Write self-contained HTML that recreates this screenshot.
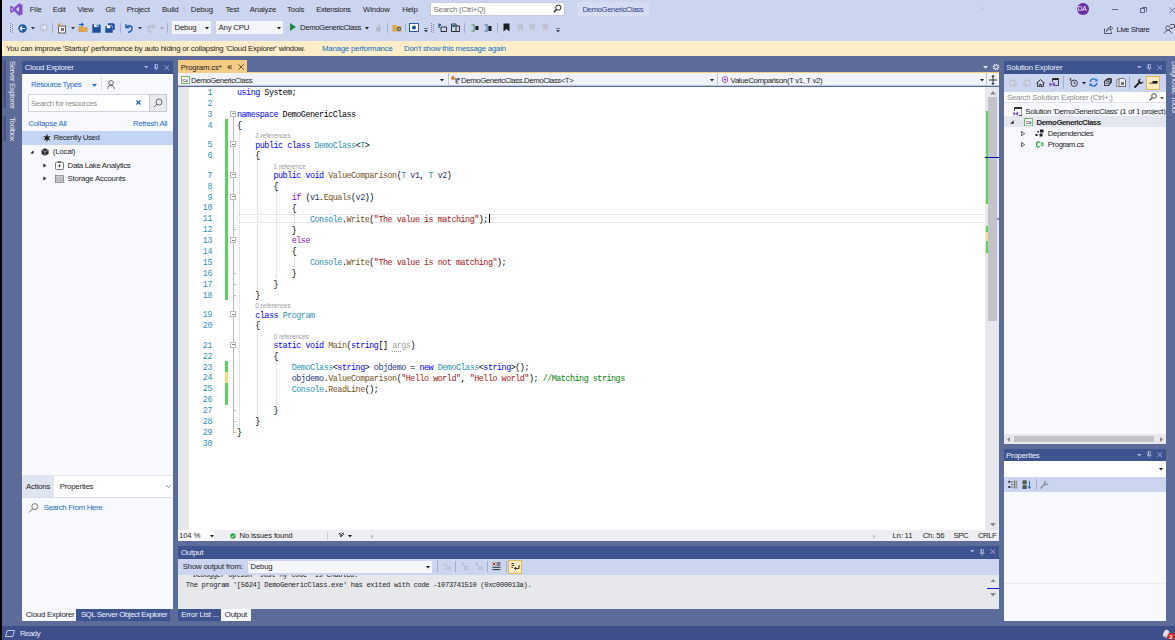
<!DOCTYPE html>
<html><head><meta charset="utf-8">
<style>
*{margin:0;padding:0;box-sizing:border-box}
html,body{width:1175px;height:640px;overflow:hidden;background:#5D6B99;font-family:"Liberation Sans",sans-serif;font-size:7.8px;letter-spacing:-0.2px;color:#1E1E1E}
.a{position:absolute}
.t{position:absolute;white-space:nowrap;line-height:1}
#blk{left:0;top:0;width:2px;height:640px;background:#000}
#menu{left:2px;top:0;width:1173px;height:40.5px;background:#CCD5F0}
#info{left:2px;top:40.5px;width:1173px;height:15.5px;background:#FDEDC9}
#status{left:2px;top:626px;width:1173px;height:14px;background:#3E4F8C}
.cap{background:#3E5491;color:#F0F2F8}
#ce{left:22px;top:61px;width:151px;height:560px;background:#F7F9FE}
#ed{left:178px;top:60px;width:821px;height:481px;background:#fff}
#out{left:178px;top:545.5px;width:821px;height:76px;background:#E7E8EC}
#se{left:1003.7px;top:61px;width:162.6px;height:382.7px;background:#F7F9FE}
#pr{left:1003.7px;top:448.8px;width:162.6px;height:172.6px;background:#F7F9FE}
.ln{left:189px;width:23px;text-align:right;font-family:"Liberation Mono",monospace;font-size:8.3px;letter-spacing:-0.4px;color:#2B91AF}
.code{left:237px;font-family:"Liberation Mono",monospace;font-size:8.4px;letter-spacing:-0.465px;color:#000;white-space:pre}
.lens{font-size:6.35px;letter-spacing:0;color:#9C9C9C}
.k{color:#0000FF}.ty{color:#2B91AF}.s{color:#A31515}.c{color:#008000}.m{color:#74531F}.v{color:#1F377F}.ct{color:#8F08C4}.g{color:#A0A0A0}.g2{color:#A0A0A0;border-bottom:0.8px dotted #A0A0A0}
</style></head><body>
<!-- MENU BAR -->
<div class="a" style="left:0;top:0;width:2px;height:640px;background:#000;z-index:5"></div>
<div class="a" style="left:2px;top:0;width:1173px;height:40.5px;background:#CCD5F0"></div>
<svg class="a" style="left:9.5px;top:3px" width="13" height="13" viewBox="0 0 13 13"><path d="M9.0 0.2 L12.5 1.7 V11.2 L9.0 12.8 L4.0 7.9 L1.4 9.9 L0.2 9.3 V3.4 L1.4 2.7 L4.0 4.8 Z M9.0 3.8 L5.8 6.35 L9.0 8.9 Z M1.6 4.7 V8.0 L3.3 6.35 Z" fill="#8650CC" fill-rule="evenodd"/></svg>
<div class="t" style="left:29.8px;top:5.8px">File</div>
<div class="t" style="left:52.8px;top:5.8px">Edit</div>
<div class="t" style="left:77.4px;top:5.8px">View</div>
<div class="t" style="left:105.5px;top:5.8px">Git</div>
<div class="t" style="left:126.8px;top:5.8px">Project</div>
<div class="t" style="left:162px;top:5.8px">Build</div>
<div class="t" style="left:190.8px;top:5.8px">Debug</div>
<div class="t" style="left:225.4px;top:5.8px">Test</div>
<div class="t" style="left:249.8px;top:5.8px">Analyze</div>
<div class="t" style="left:287.1px;top:5.8px">Tools</div>
<div class="t" style="left:316.2px;top:5.8px;letter-spacing:-0.37px">Extensions</div>
<div class="t" style="left:363.1px;top:5.8px">Window</div>
<div class="t" style="left:402.3px;top:5.8px">Help</div>
<div class="a" style="left:430.4px;top:2.2px;width:135px;height:13.4px;background:#fff;border:1px solid #C6CCDF"></div>
<div class="t" style="left:433.6px;top:5.8px;color:#717171">Search (Ctrl+Q)</div>
<svg class="a" style="left:553px;top:4px" width="9" height="9" viewBox="0 0 9 9"><circle cx="5.3" cy="3.6" r="2.6" fill="none" stroke="#1E1E1E" stroke-width="1"/><path d="M3.4 5.5 L0.8 8.2" stroke="#1E1E1E" stroke-width="1.3"/></svg>
<div class="a" style="left:577px;top:1.6px;width:71.7px;height:14.6px;background:#D6DDF3"></div>
<div class="t" style="left:582.4px;top:5.8px;color:#33438A;letter-spacing:-0.42px">DemoGenericClass</div>
<div class="a" style="left:1076.7px;top:2.8px;width:12.4px;height:12.4px;border-radius:50%;background:#6A2DA4"></div>
<div class="t" style="left:1077.6px;top:6.1px;color:#fff;font-size:6.6px">DA</div>
<div class="a" style="left:1111.8px;top:9.1px;width:6.3px;height:0.8px;background:#5B6792"></div>
<div class="a" style="left:1140px;top:7.8px;width:5.4px;height:5.2px;border:0.75px solid #5B6792"></div>
<div class="a" style="left:1141.5px;top:6.5px;width:5.4px;height:5.2px;border-top:0.75px solid #5B6792;border-right:0.75px solid #5B6792"></div>
<svg class="a" style="left:1168.5px;top:7px" width="8" height="8" viewBox="0 0 8 8"><path d="M0.3 0.3 L6.5 6.3 M6.5 0.3 L0.3 6.3" stroke="#5B6792" stroke-width="0.75"/></svg>
<!-- TOOLBAR -->
<svg class="a" style="left:10px;top:22.5px" width="3" height="10" viewBox="0 0 3 10"><g fill="#7A80A0"><rect x="0" y="0" width="1" height="1"/><rect x="2" y="1" width="1" height="1"/><rect x="0" y="2" width="1" height="1"/><rect x="2" y="3" width="1" height="1"/><rect x="0" y="4" width="1" height="1"/><rect x="2" y="5" width="1" height="1"/><rect x="0" y="6" width="1" height="1"/><rect x="2" y="7" width="1" height="1"/><rect x="0" y="8" width="1" height="1"/><rect x="2" y="9" width="1" height="1"/></g></svg>
<svg class="a" style="left:17.9px;top:23.5px" width="9" height="9" viewBox="0 0 9 9"><circle cx="4.5" cy="4.5" r="4.2" fill="#1B5BA6"/><path d="M2 4.5 H7 M2 4.5 L4.2 2.5 M2 4.5 L4.2 6.5" stroke="#fff" stroke-width="1.1" fill="none"/></svg>
<svg class="a" style="left:31px;top:26.5px" width="4" height="3"><path d="M0 0 H4 L2 2.5Z" fill="#3A3A4A"/></svg>
<svg class="a" style="left:38.8px;top:23.3px" width="9" height="9" viewBox="0 0 9 9"><circle cx="4.5" cy="4.5" r="4.2" fill="#C3C8D8"/><path d="M2 4.5 H7 M7 4.5 L4.8 2.5 M7 4.5 L4.8 6.5" stroke="#EEF0F8" stroke-width="1.1" fill="none"/></svg>
<div class="a" style="left:52.3px;top:22.5px;width:0.8px;height:10px;background:#A5AEC9"></div>
<svg class="a" style="left:57.4px;top:22.5px" width="10" height="11" viewBox="0 0 10 11"><rect x="1.5" y="3" width="7" height="7" fill="#F4F4F4" stroke="#555" stroke-width="0.9"/><path d="M0.5 0.5 L3.5 0.5 L3.5 3.5 L0.5 3.5Z" fill="#D89B4A"/><rect x="4" y="5" width="3" height="3" fill="#777"/></svg>
<svg class="a" style="left:71px;top:26.5px" width="4" height="3"><path d="M0 0 H4 L2 2.5Z" fill="#3A3A4A"/></svg>
<svg class="a" style="left:77.9px;top:22px" width="10" height="11" viewBox="0 0 10 11"><path d="M0.5 4 H4 L5 5 H9.5 V10 H0.5Z" fill="#DCA64C"/><path d="M1 2.5 L5 2.5 M3.5 0.8 L5.2 2.5 L3.5 4.2" stroke="#1B5BA6" stroke-width="1.1" fill="none"/></svg>
<svg class="a" style="left:92.4px;top:23.5px" width="9" height="9" viewBox="0 0 9 9"><path d="M0.3 0.3 H7.5 L8.7 1.5 V8.7 H0.3Z" fill="#1B4E9B"/><rect x="2" y="0.3" width="4.5" height="2.8" fill="#fff"/><rect x="4.6" y="0.8" width="1.2" height="1.8" fill="#1B4E9B"/></svg>
<svg class="a" style="left:105.4px;top:22.5px" width="10" height="10" viewBox="0 0 10 10"><path d="M0.3 3 H6.5 L7.7 4.2 V9.7 H0.3Z" fill="#1B4E9B"/><path d="M3 0.3 H8.5 L9.7 1.5 V7 H8 V3.5 L6.8 2.2 H3Z" fill="#1B4E9B"/><rect x="1.8" y="3" width="3.5" height="2.2" fill="#fff"/></svg>
<div class="a" style="left:119.5px;top:22.5px;width:0.8px;height:10px;background:#A5AEC9"></div>
<svg class="a" style="left:124.3px;top:23px" width="9" height="10" viewBox="0 0 9 10"><path d="M2 1 V4.5 H5.5" stroke="#1B5BA6" stroke-width="1.3" fill="none"/><path d="M2.3 4.2 C4 2 8 2.2 8 5.5 C8 7.8 6 9 4 9.3" stroke="#1B5BA6" stroke-width="1.4" fill="none"/></svg>
<svg class="a" style="left:137.5px;top:26.5px" width="4" height="3"><path d="M0 0 H4 L2 2.5Z" fill="#3A3A4A"/></svg>
<svg class="a" style="left:146.8px;top:23px" width="9" height="10" viewBox="0 0 9 10"><path d="M7 1 V4.5 H3.5" stroke="#B5B9C7" stroke-width="1.2" fill="none"/><path d="M6.7 4.2 C5 2 1 2.2 1 5.5 C1 7.8 3 9 5 9.3" stroke="#B5B9C7" stroke-width="1.2" fill="none"/></svg>
<svg class="a" style="left:159.5px;top:26.5px" width="4" height="3"><path d="M0 0 H4 L2 2.5Z" fill="#9A9FB0"/></svg>
<div class="a" style="left:167.2px;top:22.5px;width:0.8px;height:10px;background:#A5AEC9"></div>
<div class="a" style="left:172.3px;top:21.3px;width:39.2px;height:12.4px;background:#F5F6FA"></div>
<div class="t" style="left:174.5px;top:24px">Debug</div>
<svg class="a" style="left:205px;top:26.5px" width="4" height="3"><path d="M0 0 H4 L2 2.5Z" fill="#1E1E1E"/></svg>
<div class="a" style="left:216px;top:21.3px;width:67px;height:12.4px;background:#F5F6FA"></div>
<div class="t" style="left:218.5px;top:24px">Any CPU</div>
<svg class="a" style="left:277px;top:26.5px" width="4" height="3"><path d="M0 0 H4 L2 2.5Z" fill="#1E1E1E"/></svg>
<svg class="a" style="left:289.7px;top:23.3px" width="6" height="8"><path d="M0 0 L6 4 L0 8Z" fill="#1E8A3A"/></svg>
<div class="t" style="left:300px;top:24px;letter-spacing:-0.42px">DemoGenericClass</div>
<svg class="a" style="left:365px;top:26.5px" width="4" height="3"><path d="M0 0 H4 L2 2.5Z" fill="#1E1E1E"/></svg>
<svg class="a" style="left:375px;top:23px" width="7" height="9" viewBox="0 0 7 9"><path d="M3.5 0.3 C6.5 3 6.8 8.7 3.5 8.7 C0.2 8.7 0.5 5 2 3.3 C2.2 4.5 2.8 5 3.2 5 C3.8 3.5 3.8 2 3.5 0.3Z" fill="#B4B9CA"/></svg>
<div class="a" style="left:386.7px;top:22.5px;width:0.8px;height:10px;background:#A5AEC9"></div>
<svg class="a" style="left:391.6px;top:23px" width="10" height="9"><path d="M0.5 2 H4 L5 3 H9.5 V8.5 H0.5Z" fill="#DCA64C"/><circle cx="7" cy="6" r="1.6" fill="none" stroke="#1B4E9B" stroke-width="0.9"/></svg>
<div class="a" style="left:404.5px;top:22.5px;width:0.8px;height:10px;background:#A5AEC9"></div>
<svg class="a" style="left:409.4px;top:23px" width="10" height="9"><rect x="0.5" y="0.5" width="9" height="8" fill="#fff" stroke="#1B4E9B" stroke-width="0.9"/><circle cx="5" cy="4.5" r="2" fill="#1B4E9B"/></svg>
<svg class="a" style="left:423.5px;top:27.5px" width="4" height="5"><path d="M0 0.4 H4" stroke="#3A3A4A" stroke-width="0.7"/><path d="M0 2 H4 L2 4.5Z" fill="#3A3A4A"/></svg>
<svg class="a" style="left:431px;top:22.5px" width="3" height="10"><g fill="#7A80A0"><rect x="0" y="0" width="1" height="1"/><rect x="2" y="1" width="1" height="1"/><rect x="0" y="2" width="1" height="1"/><rect x="2" y="3" width="1" height="1"/><rect x="0" y="4" width="1" height="1"/><rect x="2" y="5" width="1" height="1"/><rect x="0" y="6" width="1" height="1"/><rect x="2" y="7" width="1" height="1"/><rect x="0" y="8" width="1" height="1"/><rect x="2" y="9" width="1" height="1"/></g></svg>
<svg class="a" style="left:437.8px;top:23px" width="9" height="9"><path d="M1 0.5 V5 M1 2.5 H3 M3 4 H8.5 V8.5 H3Z" stroke="#1E1E1E" stroke-width="0.9" fill="none"/><rect x="1" y="1" width="2" height="2" fill="#1B5BA6"/></svg>
<svg class="a" style="left:450.8px;top:23px" width="9" height="9"><path d="M0.5 1 H5 V8.5 H0.5Z M5 3 H8.5 V8.5 H5" stroke="#1E1E1E" stroke-width="0.9" fill="none"/><rect x="1.5" y="2" width="2.5" height="2" fill="#1B5BA6"/></svg>
<div class="a" style="left:464.3px;top:22.5px;width:0.8px;height:10px;background:#A5AEC9"></div>
<svg class="a" style="left:470.8px;top:23.5px" width="8" height="8"><path d="M0.5 1 H4 M2 3 H6 M2 5 H6 M0.5 7 H4" stroke="#2A8A3A" stroke-width="0.9"/><rect x="4.5" y="2" width="3" height="4" fill="#1E1E1E"/></svg>
<svg class="a" style="left:483.7px;top:23.5px" width="8" height="8"><path d="M0.5 1 H4 M2 3 H6 M2 5 H6 M0.5 7 H4" stroke="#1B5BA6" stroke-width="0.9"/><rect x="4.5" y="2" width="3" height="5" fill="#1E1E1E"/></svg>
<div class="a" style="left:497.3px;top:22.5px;width:0.8px;height:10px;background:#A5AEC9"></div>
<svg class="a" style="left:502.5px;top:23px" width="7" height="9"><path d="M0.5 0.5 H6.5 V8.5 L3.5 6 L0.5 8.5Z" fill="#1E1E1E"/></svg>
<svg class="a" style="left:515.5px;top:23px" width="8" height="9"><path d="M2 0.5 H7 V8 L4.5 6 L2 8Z" fill="#C0C4D2"/><path d="M0 3 H3 L1.5 1.5" stroke="#C0C4D2" stroke-width="0.8" fill="none"/></svg>
<svg class="a" style="left:528px;top:23px" width="8" height="9"><path d="M2 0.5 H7 V8 L4.5 6 L2 8Z" fill="#C0C4D2"/><path d="M0 3 H3 L1.5 4.5" stroke="#C0C4D2" stroke-width="0.8" fill="none"/></svg>
<svg class="a" style="left:540.5px;top:23px" width="8" height="9"><path d="M2 0.5 H7 V8 L4.5 6 L2 8Z" fill="#C0C4D2"/><path d="M0 1 L3 4 M3 1 L0 4" stroke="#C0C4D2" stroke-width="0.8" fill="none"/></svg>
<svg class="a" style="left:556px;top:27.5px" width="4" height="5"><path d="M0 0.4 H4" stroke="#3A3A4A" stroke-width="0.7"/><path d="M0 2 H4 L2 4.5Z" fill="#3A3A4A"/></svg>
<svg class="a" style="left:1103.6px;top:24.6px" width="9" height="9"><path d="M0.5 3.5 V8.5 H7.5 V6.5" stroke="#3A3A4A" stroke-width="0.8" fill="none"/><path d="M2.5 6.5 C2.5 3.5 4.5 2.5 6.5 2.5 V1 L8.7 3.2 L6.5 5.4 V4 C5 4 3.5 4.5 2.5 6.5Z" stroke="#3A3A4A" stroke-width="0.8" fill="none"/></svg>
<div class="t" style="left:1116.5px;top:25.5px;letter-spacing:-0.45px">Live Share</div>
<svg class="a" style="left:1164px;top:24px" width="11" height="10"><circle cx="4" cy="4" r="2.2" fill="none" stroke="#3A3A4A" stroke-width="0.8"/><path d="M0.5 9.5 C1 7 2.5 6.5 4 6.5 C5.5 6.5 7 7 7.5 9.5" stroke="#3A3A4A" stroke-width="0.8" fill="none"/><path d="M6 0.5 H10.5 V4 H8 L7 5" stroke="#3A3A4A" stroke-width="0.8" fill="none"/></svg>
<!-- INFOBAR -->
<div class="a" style="left:2px;top:40.5px;width:1173px;height:15.5px;background:#FDEDC9"></div>
<div class="t" style="left:6px;top:44.6px">You can improve 'Startup' performance by auto hiding or collapsing 'Cloud Explorer' window.</div>
<div class="t" style="left:322px;top:44.6px;color:#0E70C0">Manage performance</div>
<div class="t" style="left:404px;top:44.6px;color:#0E70C0">Don't show this message again</div>

<!-- LEFT AUTOHIDE TABS -->
<div class="a" style="left:2.5px;top:60px;width:3px;height:48px;background:#4A5886"></div>
<div class="a" style="left:2.5px;top:116px;width:3px;height:25px;background:#4A5886"></div>
<div class="t" style="left:8.2px;top:60.5px;color:#E6E9F2;letter-spacing:-0.45px;transform-origin:0 0;transform:translate(8px,0) rotate(90deg)">Server Explorer</div>
<div class="t" style="left:8.2px;top:116.5px;color:#E6E9F2;letter-spacing:-0.4px;transform-origin:0 0;transform:translate(8px,0) rotate(90deg)">Toolbox</div>
<!-- CLOUD EXPLORER -->
<div class="a" style="left:22px;top:61px;width:151px;height:547.7px;background:#F7F9FE"></div><div class="a" style="left:22px;top:608.7px;width:54px;height:12.6px;background:#F7F9FE"></div>
<div class="a cap" style="left:22px;top:61px;width:151px;height:12.7px"></div>
<div class="t" style="left:24.8px;top:63.6px;color:#EEF0F7">Cloud Explorer</div>
<svg class="a" style="left:143.6px;top:65.8px" width="4.6" height="2.4"><path d="M0 0 H4.6 L2.3 2.4Z" fill="#A9B4DB"/></svg>
<svg class="a" style="left:154.0px;top:64.1px" width="4.4" height="6.8" viewBox="0 0 4.4 6.8"><path d="M1.1 0.45 H3.5 V4.2 H1.1Z" fill="none" stroke="#A9B4DB" stroke-width="0.8"/><rect x="0.8" y="0.4" width="1.2" height="3.9" fill="#A9B4DB"/><path d="M0 4.3 H4.4 M2.2 4.3 V6.8" stroke="#A9B4DB" stroke-width="0.8"/></svg>
<svg class="a" style="left:163.6px;top:64.8px" width="5.4" height="5.2"><path d="M0.3 0.3 L5.1 4.9 M5.1 0.3 L0.3 4.9" stroke="#A9B4DB" stroke-width="0.9"/></svg>
<div class="t" style="left:31px;top:80.9px;color:#1E6BC6;letter-spacing:-0.42px">Resource Types</div>
<svg class="a" style="left:91.8px;top:83.5px" width="5" height="3"><path d="M0 0 H5 L2.5 2.8Z" fill="#1E6BC6"/></svg>
<div class="a" style="left:101.4px;top:76.5px;width:0.7px;height:13.5px;background:#D6DBE8"></div>
<svg class="a" style="left:106.6px;top:79.8px" width="8" height="9" viewBox="0 0 8 9"><circle cx="4" cy="2.9" r="2.3" fill="none" stroke="#3A3A4A" stroke-width="0.8"/><path d="M0.6 8.8 C0.8 6.3 2.2 5.3 4 5.3 C5.8 5.3 7.2 6.3 7.4 8.8" stroke="#3A3A4A" stroke-width="0.8" fill="none"/></svg>
<div class="a" style="left:28.3px;top:94px;width:138.4px;height:17.7px;background:#fff;border:1px solid #CFD3DE"></div>
<div class="t" style="left:31px;top:100.2px;color:#8A8A8A;letter-spacing:-0.33px">Search for resources</div>
<svg class="a" style="left:135.6px;top:100.4px" width="5" height="5"><path d="M0.5 0.5 L4.5 4.5 M4.5 0.5 L0.5 4.5" stroke="#1E6BC6" stroke-width="1.25"/></svg>
<div class="a" style="left:148.5px;top:94px;width:18.2px;height:17.7px;background:#E9EAEF;border:1px solid #C4C8D3"></div>
<svg class="a" style="left:152.5px;top:97.5px" width="10" height="10" viewBox="0 0 10 10"><circle cx="6" cy="4" r="3" fill="none" stroke="#4A4A5A" stroke-width="0.8"/><path d="M3.8 6.2 L0.8 9.2" stroke="#4A4A5A" stroke-width="0.9"/></svg>
<div class="t" style="left:28.3px;top:119.7px;color:#1E6BC6">Collapse All</div>
<div class="t" style="left:133.1px;top:119.7px;color:#1E6BC6;letter-spacing:-0.33px">Refresh All</div>
<div class="a" style="left:22px;top:131.4px;width:151px;height:13.2px;background:#C4D4F5"></div>
<svg class="a" style="left:40.5px;top:133px" width="10" height="10" viewBox="0 0 10 10"><path d="M0.5 4 H2.5 M0.5 5.5 H2.5" stroke="#9A9A9A" stroke-width="0.7"/><path d="M6 0.6 L6.9 3.6 L9.6 3 L7.7 5 L9.4 7.4 L6.7 6.6 L5.9 9.4 L5.1 6.6 L2.6 7.4 L4.2 5 L2.4 3 L5.1 3.6Z" fill="#1E1E1E"/></svg>
<div class="t" style="left:53.5px;top:134.3px;letter-spacing:-0.36px">Recently Used</div>
<svg class="a" style="left:29.5px;top:149.5px" width="4" height="4"><path d="M3.6 0.3 V3.6 H0.3Z" fill="#1E1E1E"/></svg>
<svg class="a" style="left:40.8px;top:147.5px" width="8" height="8" viewBox="0 0 8 8"><path d="M4 0.3 L7.5 2 V6 L4 7.7 L0.5 6 V2Z" fill="#2A2A2A"/><path d="M0.7 2.1 L4 3.7 L7.3 2.1 M4 3.7 V7.5" stroke="#F7F9FE" stroke-width="0.5" fill="none"/></svg>
<div class="t" style="left:52.8px;top:147.7px">(Local)</div>
<svg class="a" style="left:43.2px;top:163.2px" width="4" height="5"><path d="M0.4 0.6 L3.2 2.5 L0.4 4.4Z" fill="#1E1E1E"/></svg>
<svg class="a" style="left:54.9px;top:160.5px" width="9" height="9" viewBox="0 0 9 9"><rect x="0.5" y="1.2" width="8" height="7.3" rx="1" fill="#fff" stroke="#555" stroke-width="0.8"/><rect x="3" y="0.2" width="3" height="1.3" fill="#555"/><path d="M4.5 3.2 L5.6 4.8 L4.5 6.4 L3.4 4.8Z" fill="#333"/></svg>
<div class="t" style="left:67.6px;top:161.7px;letter-spacing:-0.3px">Data Lake Analytics</div>
<svg class="a" style="left:43.2px;top:176.4px" width="4" height="5"><path d="M0.4 0.6 L3.2 2.5 L0.4 4.4Z" fill="#1E1E1E"/></svg>
<svg class="a" style="left:54.9px;top:174.5px" width="9" height="8" viewBox="0 0 9 8"><rect x="0.4" y="0.4" width="8.2" height="7.2" fill="#D0D0D4" stroke="#777" stroke-width="0.7"/><path d="M0.5 3 H8.5 M0.5 5.3 H8.5" stroke="#888" stroke-width="0.5"/></svg>
<div class="t" style="left:67.6px;top:174.9px">Storage Accounts</div>
<!-- actions -->
<div class="a" style="left:22px;top:475.2px;width:151px;height:0.7px;background:#E3E6EE"></div>
<div class="a" style="left:22px;top:475.8px;width:31.6px;height:21.5px;background:#DFE4F1"></div>
<div class="a" style="left:53.6px;top:475.8px;width:119.4px;height:21.5px;background:#fff"></div>
<div class="a" style="left:22px;top:497px;width:151px;height:1px;background:#D9DFEF"></div>
<div class="t" style="left:26px;top:482.6px">Actions</div>
<div class="t" style="left:59.7px;top:482.6px">Properties</div>
<svg class="a" style="left:166px;top:485px" width="5" height="3"><path d="M0.3 0.3 L2.5 2.5 L4.7 0.3" stroke="#555" stroke-width="0.7" fill="none"/></svg>
<svg class="a" style="left:27.9px;top:503px" width="11" height="10" viewBox="0 0 11 10"><circle cx="6.8" cy="3.6" r="3" fill="none" stroke="#555" stroke-width="0.8"/><path d="M4.6 5.8 L1 9.5" stroke="#555" stroke-width="0.9"/></svg>
<div class="t" style="left:43.8px;top:504px;color:#1E6BC6;letter-spacing:-0.36px">Search From Here</div>
<!-- bottom tabs -->
<div class="a" style="left:76px;top:608.7px;width:94px;height:12.6px;background:#3E5491"></div>
<div class="t" style="left:25.7px;top:611.4px">Cloud Explorer</div>
<div class="t" style="left:80.9px;top:611.4px;color:#EEF0F7;letter-spacing:-0.39px">SQL Server Object Explorer</div>

<!--ED--><div class="a" style="left:178px;top:60.2px;width:68.7px;height:11.5px;background:#F5CC84"></div>
<div class="a" style="left:178px;top:71.5px;width:821px;height:1.6px;background:#F5CC84"></div>
<div class="t" style="left:180.8px;top:63.6px">Program.cs*</div>
<svg class="a" style="left:226.9px;top:65.3px" width="5.4" height="4.2" viewBox="0 0 5.4 4.2"><path d="M0 2.1 H2 M2 0.4 V3.8" stroke="#5A4626" stroke-width="0.8" fill="none"/><rect x="2.3" y="0.9" width="2.7" height="2.4" fill="none" stroke="#5A4626" stroke-width="0.8"/></svg>
<svg class="a" style="left:238.3px;top:64px" width="6" height="6"><path d="M0.3 0.3 L5.7 5.7 M5.7 0.3 L0.3 5.7" stroke="#5A4626" stroke-width="0.9"/></svg>
<svg class="a" style="left:982.5px;top:66px" width="5" height="3"><path d="M0 0 H5 L2.5 2.8Z" fill="#E8EBF5"/></svg>
<svg class="a" style="left:991.5px;top:63px" width="8" height="8" viewBox="0 0 8 8"><circle cx="4" cy="4" r="2.6" fill="none" stroke="#DDE2F0" stroke-width="1.5" stroke-dasharray="1.1 0.9"/><circle cx="4" cy="4" r="1.9" fill="none" stroke="#DDE2F0" stroke-width="0.9"/></svg>
<div class="a" style="left:178px;top:73.1px;width:821px;height:13.4px;background:#F0F3FC;border-bottom:1px solid #BCC6E3"></div>
<div class="a" style="left:447.5px;top:73.1px;width:0.8px;height:12.4px;background:#BCC6E3"></div>
<div class="a" style="left:717px;top:73.1px;width:0.8px;height:12.4px;background:#BCC6E3"></div>
<div class="a" style="left:985.7px;top:73.1px;width:0.8px;height:12.4px;background:#BCC6E3"></div>
<svg class="a" style="left:180.7px;top:75.8px" width="9" height="8" viewBox="0 0 9 8"><rect x="0.5" y="0.5" width="8" height="7" fill="#fff" stroke="#6BB36B" stroke-width="1"/><text x="1.6" y="6" font-size="4.2" font-family="Liberation Sans" font-weight="bold" fill="#333">C#</text></svg>
<div class="t" style="left:191px;top:76.5px;letter-spacing:-0.4px">DemoGenericClass</div>
<svg class="a" style="left:440px;top:78.8px" width="4" height="3"><path d="M0 0 H4 L2 2.5Z" fill="#1E1E1E"/></svg>
<svg class="a" style="left:450.3px;top:75px" width="10" height="9" viewBox="0 0 10 9"><path d="M0.5 3 L3 0.5 L5.5 3 L3 5.5Z" fill="#D08A2A"/><path d="M5 4 H8 M6 4 V8 H8.5 M6 6 H8.5" stroke="#333" stroke-width="0.8" fill="none"/><rect x="7.5" y="3" width="2" height="2" fill="#1B5BA6"/></svg>
<div class="t" style="left:461px;top:76.5px;letter-spacing:-0.4px">DemoGenericClass.DemoClass&lt;T&gt;</div>
<svg class="a" style="left:709.5px;top:78.8px" width="4" height="3"><path d="M0 0 H4 L2 2.5Z" fill="#1E1E1E"/></svg>
<svg class="a" style="left:721.5px;top:75.8px" width="6" height="7" viewBox="0 0 6 7"><path d="M3 0.4 L5.6 1.8 V5.2 L3 6.6 L0.4 5.2 V1.8Z" fill="#fff" stroke="#8A3FC2" stroke-width="0.9"/><path d="M3 2.4 L4.3 3.1 V4.1 L3 4.8 L1.7 4.1 V3.1Z" fill="#8A3FC2"/></svg>
<div class="t" style="left:730.6px;top:76.5px;letter-spacing:-0.34px">ValueComparison(T v1, T v2)</div>
<svg class="a" style="left:980px;top:78.8px" width="4" height="3"><path d="M0 0 H4 L2 2.5Z" fill="#1E1E1E"/></svg>
<svg class="a" style="left:988.5px;top:74.5px" width="8" height="10" viewBox="0 0 8 10"><path d="M4 0 V10 M0 5 H8" stroke="#333" stroke-width="1"/><path d="M2 2 L4 0.5 L6 2 Z M2 8 L4 9.5 L6 8Z" fill="#333"/></svg>
<div class="a" style="left:178px;top:86.5px;width:807px;height:443.5px;background:#fff"></div>
<div class="a" style="left:178px;top:86.5px;width:11px;height:443.5px;background:#E6E7E8"></div>
<div class="a" style="left:237px;top:214.1px;width:748px;height:9.4px;border:1px solid #E8E8E8;border-right:none"></div>
<div class="a" style="left:488.6px;top:214.4px;width:0.9px;height:8.6px;background:#000"></div>
<div class="a" style="left:225.1px;top:119.2px;width:3.4px;height:180.9px;background:#5CD35A"></div>
<div class="a" style="left:225.1px;top:361.1px;width:3.4px;height:10.9px;background:#5CD35A"></div>
<div class="a" style="left:225.1px;top:372.0px;width:3.4px;height:10.9px;background:#F3E07A"></div>
<div class="a" style="left:225.1px;top:382.9px;width:3.4px;height:21.8px;background:#5CD35A"></div>
<div class="a" style="left:232.9px;top:116.9px;width:0.8px;height:315.1px;background:#B8B8B8"></div>
<div class="a" style="left:230.2px;top:110.7px;width:5.8px;height:6.2px;border:0.8px solid #B8B8B8;background:#fff"></div>
<div class="a" style="left:231.5px;top:113.4px;width:3.2px;height:0.8px;background:#8A8A8A"></div>
<div class="a" style="left:230.2px;top:141.2px;width:5.8px;height:6.2px;border:0.8px solid #B8B8B8;background:#fff"></div>
<div class="a" style="left:231.5px;top:143.8px;width:3.2px;height:0.8px;background:#8A8A8A"></div>
<div class="a" style="left:230.2px;top:171.7px;width:5.8px;height:6.2px;border:0.8px solid #B8B8B8;background:#fff"></div>
<div class="a" style="left:231.5px;top:174.3px;width:3.2px;height:0.8px;background:#8A8A8A"></div>
<div class="a" style="left:230.2px;top:193.5px;width:5.8px;height:6.2px;border:0.8px solid #B8B8B8;background:#fff"></div>
<div class="a" style="left:231.5px;top:196.2px;width:3.2px;height:0.8px;background:#8A8A8A"></div>
<div class="a" style="left:230.2px;top:237.1px;width:5.8px;height:6.2px;border:0.8px solid #B8B8B8;background:#fff"></div>
<div class="a" style="left:231.5px;top:239.8px;width:3.2px;height:0.8px;background:#8A8A8A"></div>
<div class="a" style="left:230.2px;top:311.1px;width:5.8px;height:6.2px;border:0.8px solid #B8B8B8;background:#fff"></div>
<div class="a" style="left:231.5px;top:313.8px;width:3.2px;height:0.8px;background:#8A8A8A"></div>
<div class="a" style="left:230.2px;top:341.6px;width:5.8px;height:6.2px;border:0.8px solid #B8B8B8;background:#fff"></div>
<div class="a" style="left:231.5px;top:344.3px;width:3.2px;height:0.8px;background:#8A8A8A"></div>
<div class="a" style="left:232.9px;top:229.3px;width:3.4px;height:0.8px;background:#B8B8B8"></div>
<div class="a" style="left:232.9px;top:272.9px;width:3.4px;height:0.8px;background:#B8B8B8"></div>
<div class="a" style="left:232.9px;top:283.8px;width:3.4px;height:0.8px;background:#B8B8B8"></div>
<div class="a" style="left:232.9px;top:294.6px;width:3.4px;height:0.8px;background:#B8B8B8"></div>
<div class="a" style="left:232.9px;top:410.1px;width:3.4px;height:0.8px;background:#B8B8B8"></div>
<div class="a" style="left:232.9px;top:421.0px;width:3.4px;height:0.8px;background:#B8B8B8"></div>
<div class="a" style="left:232.9px;top:431.9px;width:3.4px;height:0.8px;background:#B8B8B8"></div>
<div class="a" style="left:238.6px;top:130.1px;width:0;height:296.4px;border-left:0.8px dotted #CFCFCF"></div>
<div class="a" style="left:257.2px;top:160.6px;width:0;height:128.6px;border-left:0.8px dotted #CFCFCF"></div>
<div class="a" style="left:275.9px;top:191.1px;width:0;height:87.2px;border-left:0.8px dotted #CFCFCF"></div>
<div class="a" style="left:294.2px;top:212.9px;width:0;height:10.9px;border-left:0.8px dotted #CFCFCF"></div>
<div class="a" style="left:294.2px;top:256.5px;width:0;height:10.9px;border-left:0.8px dotted #CFCFCF"></div>
<div class="a" style="left:257.2px;top:330.6px;width:0;height:85.0px;border-left:0.8px dotted #CFCFCF"></div>
<div class="a" style="left:275.9px;top:361.1px;width:0;height:43.6px;border-left:0.8px dotted #CFCFCF"></div>
<div class="t ln" style="top:88.9px">1</div>
<div class="t code" style="top:89.2px"><span class="k">using</span> System;</div>
<div class="t ln" style="top:99.8px">2</div>
<div class="t ln" style="top:110.7px">3</div>
<div class="t code" style="top:111.0px"><span class="k">namespace</span> DemoGenericClass</div>
<div class="t ln" style="top:121.6px">4</div>
<div class="t code" style="top:121.9px">{</div>
<div class="t lens" style="left:255.3px;top:133.0px">2 references</div>
<div class="t ln" style="top:141.2px">5</div>
<div class="t code" style="top:141.5px">    <span class="k">public</span> <span class="k">class</span> <span class="ty">DemoClass</span>&lt;<span class="ty">T</span>&gt;</div>
<div class="t ln" style="top:152.1px">6</div>
<div class="t code" style="top:152.4px">    {</div>
<div class="t lens" style="left:273.6px;top:163.5px">1 reference</div>
<div class="t ln" style="top:171.7px">7</div>
<div class="t code" style="top:172.0px">        <span class="k">public</span> <span class="k">void</span> <span class="m">ValueComparison</span>(<span class="ty">T</span> <span class="v">v1</span>, <span class="ty">T</span> <span class="v">v2</span>)</div>
<div class="t ln" style="top:182.6px">8</div>
<div class="t code" style="top:182.9px">        {</div>
<div class="t ln" style="top:193.5px">9</div>
<div class="t code" style="top:193.8px">            <span class="ct">if</span> (<span class="v">v1</span>.<span class="m">Equals</span>(<span class="v">v2</span>))</div>
<div class="t ln" style="top:204.4px">10</div>
<div class="t code" style="top:204.7px">            {</div>
<div class="t ln" style="top:215.3px">11</div>
<div class="t code" style="top:215.6px">                <span class="ty">Console</span>.<span class="m">Write</span>(<span class="s">&quot;The value is matching&quot;</span>);</div>
<div class="t ln" style="top:226.2px">12</div>
<div class="t code" style="top:226.5px">            }</div>
<div class="t ln" style="top:237.1px">13</div>
<div class="t code" style="top:237.4px">            <span class="ct">else</span></div>
<div class="t ln" style="top:248.0px">14</div>
<div class="t code" style="top:248.3px">            {</div>
<div class="t ln" style="top:258.9px">15</div>
<div class="t code" style="top:259.2px">                <span class="ty">Console</span>.<span class="m">Write</span>(<span class="s">&quot;The value is not matching&quot;</span>);</div>
<div class="t ln" style="top:269.8px">16</div>
<div class="t code" style="top:270.1px">            }</div>
<div class="t ln" style="top:280.7px">17</div>
<div class="t code" style="top:281.0px">        }</div>
<div class="t ln" style="top:291.6px">18</div>
<div class="t code" style="top:291.9px">    }</div>
<div class="t lens" style="left:255.3px;top:303.0px">0 references</div>
<div class="t ln" style="top:311.2px">19</div>
<div class="t code" style="top:311.5px">    <span class="k">class</span> <span class="ty">Program</span></div>
<div class="t ln" style="top:322.1px">20</div>
<div class="t code" style="top:322.4px">    {</div>
<div class="t lens" style="left:273.6px;top:333.5px">0 references</div>
<div class="t ln" style="top:341.7px">21</div>
<div class="t code" style="top:342.0px">        <span class="k">static</span> <span class="k">void</span> <span class="m">Main</span>(<span class="k">string</span>[] <span class="g2">ar</span><span class="g">gs</span>)</div>
<div class="t ln" style="top:352.6px">22</div>
<div class="t code" style="top:352.9px">        {</div>
<div class="t ln" style="top:363.5px">23</div>
<div class="t code" style="top:363.8px">            <span class="ty">DemoClass</span>&lt;<span class="k">string</span>&gt; <span class="v">objdemo</span> = <span class="k">new</span> <span class="ty">DemoClass</span>&lt;<span class="k">string</span>&gt;();</div>
<div class="t ln" style="top:374.4px">24</div>
<div class="t code" style="top:374.7px">            <span class="v">objdemo</span>.<span class="m">ValueComparison</span>(<span class="s">&quot;Hello world&quot;</span>, <span class="s">&quot;Hello world&quot;</span>); <span class="c">//Matching strings</span></div>
<div class="t ln" style="top:385.3px">25</div>
<div class="t code" style="top:385.6px">            <span class="ty">Console</span>.<span class="m">ReadLine</span>();</div>
<div class="t ln" style="top:396.2px">26</div>
<div class="t ln" style="top:407.1px">27</div>
<div class="t code" style="top:407.4px">        }</div>
<div class="t ln" style="top:418.0px">28</div>
<div class="t code" style="top:418.3px">    }</div>
<div class="t ln" style="top:428.9px">29</div>
<div class="t code" style="top:429.2px">}</div>
<div class="t ln" style="top:439.8px">30</div>
<div class="a" style="left:985.2px;top:86.5px;width:13.8px;height:443.5px;background:#E8E8EC"></div>
<svg class="a" style="left:989.5px;top:91px" width="6" height="3.5"><path d="M0 3.5 L3 0 L6 3.5Z" fill="#868999"/></svg>
<div class="a" style="left:987.7px;top:97.2px;width:9.2px;height:223.8px;background:#C2C3C9"></div>
<svg class="a" style="left:989.5px;top:523px" width="6" height="3.5"><path d="M0 0 L3 3.5 L6 0Z" fill="#868999"/></svg>
<div class="a" style="left:985.8px;top:110.9px;width:2.3px;height:93.1px;background:#5CD35A"></div>
<div class="a" style="left:985.8px;top:226px;width:2.3px;height:26.5px;background:#5CD35A"></div>
<div class="a" style="left:985.8px;top:232px;width:2.3px;height:8.6px;background:#F3E07A"></div>
<div class="a" style="left:985.2px;top:156.6px;width:13.8px;height:1.2px;background:#0000C0"></div>
<div class="a" style="left:996.5px;top:217.5px;width:2px;height:2px;background:#888"></div>
<div class="a" style="left:178px;top:530px;width:821px;height:11px;background:#EEEEF2"></div>
<div class="a" style="left:178px;top:530.3px;width:36.4px;height:10.4px;background:#fff"></div>
<div class="t" style="left:179.1px;top:532.1px">104 %</div>
<svg class="a" style="left:209.5px;top:535px" width="4" height="3"><path d="M0 0 H4 L2 2.5Z" fill="#1E1E1E"/></svg>
<svg class="a" style="left:230.4px;top:532.6px" width="6" height="6"><circle cx="3" cy="3" r="2.8" fill="#2FA84F"/><path d="M1.6 3 L2.6 4 L4.5 2" stroke="#fff" stroke-width="0.8" fill="none"/></svg>
<div class="t" style="left:239.5px;top:532.1px">No issues found</div>
<div class="a" style="left:327.3px;top:531.5px;width:0.8px;height:8px;background:#C9CBD3"></div>
<svg class="a" style="left:338.3px;top:532px" width="7" height="7" viewBox="0 0 7 7"><path d="M1 1 L4 4 M3 5 L6 2 L5 1 L2 4Z M0.5 3 L3 0.5" stroke="#333" stroke-width="0.8" fill="none"/></svg>
<svg class="a" style="left:348px;top:535px" width="4" height="3"><path d="M0 0 H4 L2 2.5Z" fill="#1E1E1E"/></svg>
<svg class="a" style="left:370px;top:533.5px" width="3" height="5"><path d="M3 0 L0 2.5 L3 5Z" fill="#C4C6D0"/></svg>
<svg class="a" style="left:872.5px;top:533.5px" width="3" height="5"><path d="M0 0 L3 2.5 L0 5Z" fill="#C4C6D0"/></svg>
<div class="t" style="left:892.4px;top:532.1px">Ln: 11</div>
<div class="t" style="left:922.7px;top:532.1px">Ch: 56</div>
<div class="t" style="left:953.5px;top:532.1px;letter-spacing:-0.4px">SPC</div>
<div class="t" style="left:977.9px;top:532.1px;letter-spacing:-0.5px">CRLF</div><!--/ED-->



<!-- OUTPUT -->
<div class="a" style="left:178px;top:545.5px;width:821px;height:63.2px;background:#E7E8EC"></div>
<div class="a cap" style="left:178px;top:545.5px;width:821px;height:13px"></div>
<div class="t" style="left:181px;top:548.6px;color:#EEF0F7">Output</div>
<svg class="a" style="left:970.0px;top:550.4px" width="4.6" height="2.4"><path d="M0 0 H4.6 L2.3 2.4Z" fill="#A9B4DB"/></svg>
<svg class="a" style="left:980.4px;top:548.9px" width="4.4" height="6.8" viewBox="0 0 4.4 6.8"><path d="M1.1 0.45 H3.5 V4.2 H1.1Z" fill="none" stroke="#A9B4DB" stroke-width="0.8"/><rect x="0.8" y="0.4" width="1.2" height="3.9" fill="#A9B4DB"/><path d="M0 4.3 H4.4 M2.2 4.3 V6.8" stroke="#A9B4DB" stroke-width="0.8"/></svg>
<svg class="a" style="left:989.9px;top:549.2px" width="5.4" height="5.2"><path d="M0.3 0.3 L5.1 4.9 M5.1 0.3 L0.3 4.9" stroke="#A9B4DB" stroke-width="0.9"/></svg>
<div class="a" style="left:178px;top:558.5px;width:821px;height:16px;background:#CCD5F0"></div>
<div class="t" style="left:182.8px;top:563.1px">Show output from:</div>
<div class="a" style="left:248px;top:560.6px;width:184.3px;height:12.3px;background:#F5F6FA"></div>
<div class="t" style="left:250.5px;top:563.1px">Debug</div>
<svg class="a" style="left:426px;top:566px" width="4" height="3"><path d="M0 0 H4 L2 2.5Z" fill="#1E1E1E"/></svg>
<div class="a" style="left:436.5px;top:561px;width:0.8px;height:11px;background:#A5AEC9"></div>
<div class="a" style="left:455.4px;top:561px;width:0.8px;height:11px;background:#A5AEC9"></div>
<div class="a" style="left:487.4px;top:561px;width:0.8px;height:11px;background:#A5AEC9"></div>
<div class="a" style="left:505.6px;top:561px;width:0.8px;height:11px;background:#A5AEC9"></div>
<svg class="a" style="left:442.5px;top:561.5px" width="8" height="9"><path d="M0.5 3 L2.5 1 M0.5 3 H5 M2.5 5 H8 M2.5 7 H8" stroke="#B5B9C7" stroke-width="0.9" fill="none"/></svg>
<svg class="a" style="left:461.4px;top:562px" width="8" height="8"><path d="M2 0.5 L0.5 2 M2 0.5 L3.5 2 M2 0.5 V4 M3 4.5 H7.5 M3 6 H7.5 M3 7.5 H7.5" stroke="#B5B9C7" stroke-width="0.9" fill="none"/></svg>
<svg class="a" style="left:474.6px;top:562px" width="8" height="8"><path d="M2 0.5 L0.5 2 M2 0.5 L3.5 2 M2 0.5 V4 M3 4.5 H7.5 M3 6 H7.5 M3 7.5 H7.5" stroke="#B5B9C7" stroke-width="0.9" fill="none"/></svg>
<svg class="a" style="left:492px;top:561.8px" width="9" height="9"><path d="M0.5 0.5 L3.5 3.5 M3.5 0.5 L0.5 3.5" stroke="#C5281C" stroke-width="1"/><path d="M4.5 1 H8.5 M4.5 3 H8.5 M0.5 5.3 H8.5 M0.5 7.6 H8.5" stroke="#1E1E1E" stroke-width="0.9"/></svg>
<div class="a" style="left:508.4px;top:560.1px;width:13.7px;height:13.8px;background:#FDEBC4;border:0.8px solid #E0B85A"></div>
<svg class="a" style="left:510.8px;top:562.8px" width="9" height="8"><path d="M0.5 0.5 H3 M0.5 2.5 H3 M0.5 4.5 H2 M8 2 V5.5 H3.5 M5 4 L3.5 5.5 L5 7" stroke="#1E1E1E" stroke-width="0.9" fill="none"/></svg>

<div class="a" style="left:178px;top:574.5px;width:808px;height:4.5px;overflow:hidden"><div class="t" style="left:15px;top:-2.5px;font-family:'Liberation Mono',monospace;font-size:7.1px;letter-spacing:-0.33px;color:#1E1E1E">Debugger option 'Just My Code' is enabled.</div></div>
<div class="t" style="left:185.8px;top:581.8px;font-family:'Liberation Mono',monospace;font-size:7.1px;letter-spacing:-0.33px;color:#1E1E1E">The program '[5624] DemoGenericClass.exe' has exited with code -1073741510 (0xc000013a).</div>
<svg class="a" style="left:989.5px;top:578.5px" width="6" height="3.5"><path d="M0 3.5 L3 0 L6 3.5Z" fill="#868999"/></svg>
<div class="a" style="left:986.5px;top:588.3px;width:12.5px;height:1.1px;background:#1C1CD0"></div>
<svg class="a" style="left:989.5px;top:593px" width="6" height="3.5"><path d="M0 0 L3 3.5 L6 0Z" fill="#868999"/></svg>
<svg class="a" style="left:981px;top:5.8px" width="3" height="5"><path d="M0 0 L3 2.5 L0 5Z" fill="#C4C6D0"/></svg>
<svg class="a" style="left:182px;top:5.8px" width="3" height="5"><path d="M3 0 L0 2.5 L3 5Z" fill="#C4C6D0"/></svg>
<div class="a" style="left:178px;top:608.7px;width:43px;height:12.8px;background:#3E5491"></div>
<div class="a" style="left:221px;top:608.7px;width:30px;height:12.8px;background:#F7F9FE"></div>
<div class="t" style="left:181.2px;top:611.4px;color:#EEF0F7">Error List ...</div>
<div class="t" style="left:224.8px;top:611.4px">Output</div>
<!-- SOLUTION EXPLORER -->
<div class="a" style="left:1003.7px;top:61px;width:162.6px;height:382.7px;background:#F7F9FE"></div>
<div class="a cap" style="left:1003.7px;top:61px;width:162.6px;height:12.7px"></div>
<div class="t" style="left:1006.3px;top:63.8px;color:#EEF0F7">Solution Explorer</div>
<svg class="a" style="left:1137.0px;top:65.8px" width="4.6" height="2.4"><path d="M0 0 H4.6 L2.3 2.4Z" fill="#A9B4DB"/></svg>
<svg class="a" style="left:1147.3px;top:64.1px" width="4.4" height="6.8" viewBox="0 0 4.4 6.8"><path d="M1.1 0.45 H3.5 V4.2 H1.1Z" fill="none" stroke="#A9B4DB" stroke-width="0.8"/><rect x="0.8" y="0.4" width="1.2" height="3.9" fill="#A9B4DB"/><path d="M0 4.3 H4.4 M2.2 4.3 V6.8" stroke="#A9B4DB" stroke-width="0.8"/></svg>
<svg class="a" style="left:1156.8px;top:64.8px" width="5.4" height="5.2"><path d="M0.3 0.3 L5.1 4.9 M5.1 0.3 L0.3 4.9" stroke="#A9B4DB" stroke-width="0.9"/></svg>
<div class="a" style="left:1003.7px;top:73.7px;width:162.6px;height:17.9px;background:#CCD5F0"></div>
<svg class="a" style="left:1009px;top:78.8px" width="8" height="8"><circle cx="4" cy="4" r="3.8" fill="#BFC4D4"/><path d="M1.9 4 H6.2 M1.9 4 L3.7 2.2 M1.9 4 L3.7 5.8" stroke="#E4E8F4" stroke-width="0.9" fill="none"/></svg>
<svg class="a" style="left:1022.5px;top:78.8px" width="8" height="8"><circle cx="4" cy="4" r="3.8" fill="#BFC4D4"/><path d="M1.8 4 H6.1 M6.1 4 L4.3 2.2 M6.1 4 L4.3 5.8" stroke="#E4E8F4" stroke-width="0.9" fill="none"/></svg>
<svg class="a" style="left:1035.9px;top:78.5px" width="9" height="8.5" viewBox="0 0 9 8.5"><path d="M0.5 4.3 L4.5 0.6 L8.5 4.3 M1.7 3.3 V8 H7.3 V3.3 M3.7 8 V5.5 H5.3 V8" stroke="#1E1E1E" stroke-width="0.9" fill="none"/></svg>
<svg class="a" style="left:1048.5px;top:77.8px" width="10" height="9" viewBox="0 0 10 9"><path d="M3.5 0.5 H9.5 V7.5 H6 M3.5 0.5 V4" stroke="#1E1E1E" stroke-width="0.8" fill="none"/><rect x="3.5" y="0.5" width="6" height="1.5" fill="#1E1E1E"/><path d="M0.3 5 L1.3 4.4 L3 6 L5 4 L6 4.4 V8.2 L5 8.6 L3 6.8 L1.3 8.4 L0.3 7.8Z" fill="#8661C5"/></svg>
<div class="a" style="left:1062.6px;top:76px;width:0.8px;height:13px;background:#A5AEC9"></div>
<svg class="a" style="left:1068.9px;top:77.5px" width="9" height="9" viewBox="0 0 9 9"><circle cx="5.2" cy="5.2" r="3.2" fill="none" stroke="#1E1E1E" stroke-width="0.8"/><path d="M5.2 3.5 V5.3 H6.5 M0.5 0.8 H2.5 M1.5 0.8 V3" stroke="#1E1E1E" stroke-width="0.8" fill="none"/></svg>
<svg class="a" style="left:1081.8px;top:81.5px" width="4" height="3"><path d="M0 0 H4 L2 2.5Z" fill="#1E1E1E"/></svg>
<svg class="a" style="left:1089.2px;top:77.5px" width="9" height="9" viewBox="0 0 9 9"><path d="M1.2 4 C1.4 2 3 0.9 4.6 0.9 C5.8 0.9 6.8 1.5 7.4 2.3 M7.8 5 C7.6 7 6 8.1 4.4 8.1 C3.2 8.1 2.2 7.5 1.6 6.7" stroke="#1C71C7" stroke-width="1.4" fill="none"/><path d="M8.5 0.5 V3.5 H5.5Z M0.5 8.5 V5.5 H3.5Z" fill="#1C71C7"/></svg>
<svg class="a" style="left:1103.9px;top:78px" width="8" height="8" viewBox="0 0 8 8"><rect x="0.5" y="3" width="4.5" height="4.5" fill="none" stroke="#1E1E1E" stroke-width="0.8"/><path d="M2 3 V1.5 H6.5 V6 H5 M3.5 1.5 V0.5 H7.5 V4.5 H6.5" stroke="#1E1E1E" stroke-width="0.8" fill="none"/><path d="M1.5 5.2 H4" stroke="#1E1E1E" stroke-width="0.8"/></svg>
<svg class="a" style="left:1115.9px;top:77.5px" width="10" height="9" viewBox="0 0 10 9"><rect x="0.5" y="1.5" width="5" height="7" fill="none" stroke="#555" stroke-width="0.8" stroke-dasharray="1 0.6"/><path d="M3 0.5 H8 L9.5 2 V8.5 H3Z" fill="#F0F0F0" stroke="#555" stroke-width="0.8"/><rect x="5" y="4" width="3" height="3" fill="#777"/></svg>
<div class="a" style="left:1129.3px;top:76px;width:0.8px;height:13px;background:#A5AEC9"></div>
<svg class="a" style="left:1134.3px;top:77.5px" width="10" height="10" viewBox="0 0 10 10"><path d="M1 9 L5.3 4.7" stroke="#1E1E1E" stroke-width="1.8" stroke-linecap="round"/><path d="M4.2 4 C3.6 2.2 5 0.5 7 0.7 L5.6 2.2 L6.3 3.7 L7.8 4.4 L9.3 3 C9.5 5 7.8 6.4 6 5.8" fill="#1E1E1E"/></svg>
<div class="a" style="left:1146px;top:75.5px;width:13.7px;height:14.3px;background:#FDEBC4;border:0.8px solid #E0B85A"></div>
<svg class="a" style="left:1148.5px;top:80px" width="9" height="4"><path d="M0.5 3.2 H8.5" stroke="#1E1E1E" stroke-width="0.8"/><rect x="3.5" y="1" width="5" height="2.2" fill="#1E1E1E"/></svg>
<div class="a" style="left:1003.7px;top:91.6px;width:162.6px;height:11.4px;background:#fff;border-bottom:1px solid #DDE2EE"></div>
<div class="t" style="left:1006.9px;top:94px;color:#8A8A8A">Search Solution Explorer (Ctrl+;)</div>
<svg class="a" style="left:1149px;top:92.8px" width="8" height="8" viewBox="0 0 8 8"><circle cx="5" cy="3" r="2.3" fill="none" stroke="#333" stroke-width="0.9"/><path d="M3.3 4.7 L0.6 7.4" stroke="#333" stroke-width="1.1"/></svg>
<svg class="a" style="left:1160.3px;top:96.5px" width="4" height="3"><path d="M0 0 H4 L2 2.5Z" fill="#555"/></svg>
<svg class="a" style="left:1012.7px;top:107px" width="9.5" height="9" viewBox="0 0 9.5 9"><path d="M1.5 4 V0.5 H9 V8.5 H6" stroke="#1E1E1E" stroke-width="0.8" fill="none"/><rect x="1.5" y="0.5" width="7.5" height="1.4" fill="#1E1E1E"/><path d="M0.2 5.5 L1.1 5 L2.6 6.4 L4.4 4.6 L5.3 5 V8.4 L4.4 8.8 L2.6 7.1 L1.1 8.6 L0.2 8.1Z" fill="#8661C5"/></svg>
<div class="t" style="left:1025.3px;top:107.6px;width:141px;overflow:hidden;letter-spacing:-0.3px">Solution 'DemoGenericClass' (1 of 1 project)</div>
<div class="a" style="left:1003.7px;top:116.3px;width:162.6px;height:10.9px;background:#E4E7EF"></div>
<svg class="a" style="left:1010px;top:119.5px" width="4" height="4"><path d="M3.7 0.3 V3.7 H0.3Z" fill="#1E1E1E"/></svg>
<svg class="a" style="left:1023.9px;top:117.7px" width="9.2" height="8.4" viewBox="0 0 9.2 8.4"><rect x="0.5" y="0.5" width="8.2" height="7.4" fill="#fff" stroke="#6BB36B" stroke-width="1"/><text x="2" y="6.1" font-size="4.3" font-family="Liberation Sans" font-weight="bold" fill="#333">C#</text></svg>
<div class="t" style="left:1036.6px;top:118.8px;font-weight:bold;letter-spacing:-0.47px">DemoGenericClass</div>
<svg class="a" style="left:1021px;top:130.5px" width="4" height="5.2"><path d="M0.4 0.4 L3.6 2.6 L0.4 4.8Z" fill="none" stroke="#1E1E1E" stroke-width="0.7"/></svg>
<svg class="a" style="left:1034.9px;top:129px" width="9" height="8" viewBox="0 0 9 8"><rect x="5" y="0.5" width="3.5" height="3" fill="#1E1E1E"/><rect x="4.5" y="4.5" width="3" height="3" fill="#1E1E1E"/><rect x="0.5" y="5" width="2" height="2" fill="#1E1E1E"/><rect x="2.5" y="2" width="1.5" height="1.5" fill="#1E1E1E"/></svg>
<div class="t" style="left:1047.8px;top:130.2px;letter-spacing:-0.36px">Dependencies</div>
<svg class="a" style="left:1021px;top:141.8px" width="4" height="5.2"><path d="M0.4 0.4 L3.6 2.6 L0.4 4.8Z" fill="none" stroke="#1E1E1E" stroke-width="0.7"/></svg>
<svg class="a" style="left:1035.9px;top:140.6px" width="8" height="7" viewBox="0 0 8 7"><path d="M3.8 1.6 C3.3 1 2.7 0.8 2.2 0.8 C1.2 0.8 0.6 1.8 0.6 3.5 C0.6 5.2 1.2 6.2 2.2 6.2 C2.7 6.2 3.3 6 3.8 5.4" stroke="#2E9E3E" stroke-width="1.2" fill="none"/><path d="M4.8 2.2 H7.8 M4.8 4.2 H7.8 M5.6 1.2 V5.2 M7 1.2 V5.2" stroke="#2E9E3E" stroke-width="0.6"/></svg>
<div class="t" style="left:1047.8px;top:141px;letter-spacing:-0.4px">Program.cs</div>
<div class="a" style="left:1003.7px;top:433.5px;width:162.6px;height:10.2px;background:#E8E8EC"></div>
<div class="a" style="left:1014.1px;top:435.6px;width:139.7px;height:6px;background:#C2C3C9"></div>
<svg class="a" style="left:1007px;top:436.5px" width="3" height="5"><path d="M3 0 L0 2.5 L3 5Z" fill="#868999"/></svg>
<svg class="a" style="left:1159.5px;top:436.5px" width="3" height="5"><path d="M0 0 L3 2.5 L0 5Z" fill="#868999"/></svg>
<!-- PROPERTIES -->
<div class="a" style="left:1003.7px;top:448.8px;width:162.6px;height:172.6px;background:#F7F9FE"></div>
<div class="a cap" style="left:1003.7px;top:448.8px;width:162.6px;height:12.2px"></div>
<div class="t" style="left:1006px;top:451.5px;color:#EEF0F7">Properties</div>
<svg class="a" style="left:1136.7px;top:453.6px" width="4.6" height="2.4"><path d="M0 0 H4.6 L2.3 2.4Z" fill="#A9B4DB"/></svg>
<svg class="a" style="left:1147.2px;top:451.4px" width="4.4" height="6.8" viewBox="0 0 4.4 6.8"><path d="M1.1 0.45 H3.5 V4.2 H1.1Z" fill="none" stroke="#A9B4DB" stroke-width="0.8"/><rect x="0.8" y="0.4" width="1.2" height="3.9" fill="#A9B4DB"/><path d="M0 4.3 H4.4 M2.2 4.3 V6.8" stroke="#A9B4DB" stroke-width="0.8"/></svg>
<svg class="a" style="left:1156.9px;top:452.0px" width="5.4" height="5.2"><path d="M0.3 0.3 L5.1 4.9 M5.1 0.3 L0.3 4.9" stroke="#A9B4DB" stroke-width="0.9"/></svg>
<div class="a" style="left:1003.7px;top:461px;width:162.6px;height:15.7px;background:#fff"></div>
<svg class="a" style="left:1159px;top:468px" width="4" height="3"><path d="M0 0 H4 L2 2.5Z" fill="#1E1E1E"/></svg>
<div class="a" style="left:1003.7px;top:476.7px;width:162.6px;height:15.3px;background:#CCD5F0"></div>
<svg class="a" style="left:1008px;top:480px" width="9.5" height="9" viewBox="0 0 9.5 9"><rect x="0.3" y="0.8" width="2" height="2" fill="#333"/><rect x="0.3" y="6" width="2" height="2" fill="#333"/><path d="M3 1.8 H5 M3 7 H5 M3 4.4 H5" stroke="#555" stroke-width="0.8"/><rect x="5.8" y="0.5" width="1.5" height="8" fill="#777"/><rect x="7.8" y="0.5" width="1.5" height="8" fill="#999"/></svg>
<svg class="a" style="left:1021.8px;top:479.5px" width="9.5" height="9.5" viewBox="0 0 9.5 9.5"><rect x="0.5" y="0.3" width="4.2" height="4" fill="#555"/><rect x="0.5" y="5.2" width="4.2" height="4" fill="#555"/><path d="M7.5 1 V8.2 M5.8 6.3 L7.5 8.5 L9.2 6.3" stroke="#1C71C7" stroke-width="1" fill="none"/></svg>
<div class="a" style="left:1035.6px;top:479px;width:0.8px;height:11px;background:#A5AEC9"></div>
<svg class="a" style="left:1040.2px;top:480px" width="9" height="9" viewBox="0 0 10 10"><path d="M1 9 L5.3 4.7" stroke="#8C909E" stroke-width="1.6" stroke-linecap="round"/><path d="M4.2 4 C3.6 2.2 5 0.5 7 0.7 L5.6 2.2 L6.3 3.7 L7.8 4.4 L9.3 3 C9.5 5 7.8 6.4 6 5.8" fill="#8C909E"/></svg>
<div class="a" style="left:1003.7px;top:582.5px;width:162.6px;height:0.7px;background:#E9ECF4"></div>
<!-- RIGHT AUTOHIDE -->
<div class="t" style="left:1170.4px;top:60.8px;color:#E6E9F2;letter-spacing:-0.3px;transform-origin:0 0;transform:translate(8px,0) rotate(90deg)">Diagnostic Tools</div>
<!-- STATUS BAR -->
<div class="a" style="left:2px;top:626px;width:1173px;height:14px;background:#3E4F8C"></div>
<svg class="a" style="left:5px;top:630.3px" width="10" height="7" viewBox="0 0 10 7"><path d="M2.3 0.5 H9.5 L7.7 6.5 H0.5Z" fill="none" stroke="#E6E9F2" stroke-width="0.8"/></svg>
<div class="t" style="left:19.9px;top:629.6px;color:#E6E9F2;letter-spacing:-0.45px">Ready</div>
<svg class="a" style="left:1161px;top:627.5px" width="14" height="12.5" viewBox="0 0 14 12.5"><path d="M2 7.8 C2.3 4.5 3.5 1.8 5.8 1.8 C8 1.8 8.6 4.2 8.4 7.2 L8.8 8.6 H1.5Z" fill="#DDE0EA"/><path d="M4 9.3 H6" stroke="#DDE0EA" stroke-width="0.9"/><circle cx="10" cy="8.2" r="3.5" fill="#E3201B"/><text x="8.2" y="10.5" font-size="6.2" font-weight="bold" font-family="Liberation Sans" fill="#fff">2</text></svg>

</body></html>
